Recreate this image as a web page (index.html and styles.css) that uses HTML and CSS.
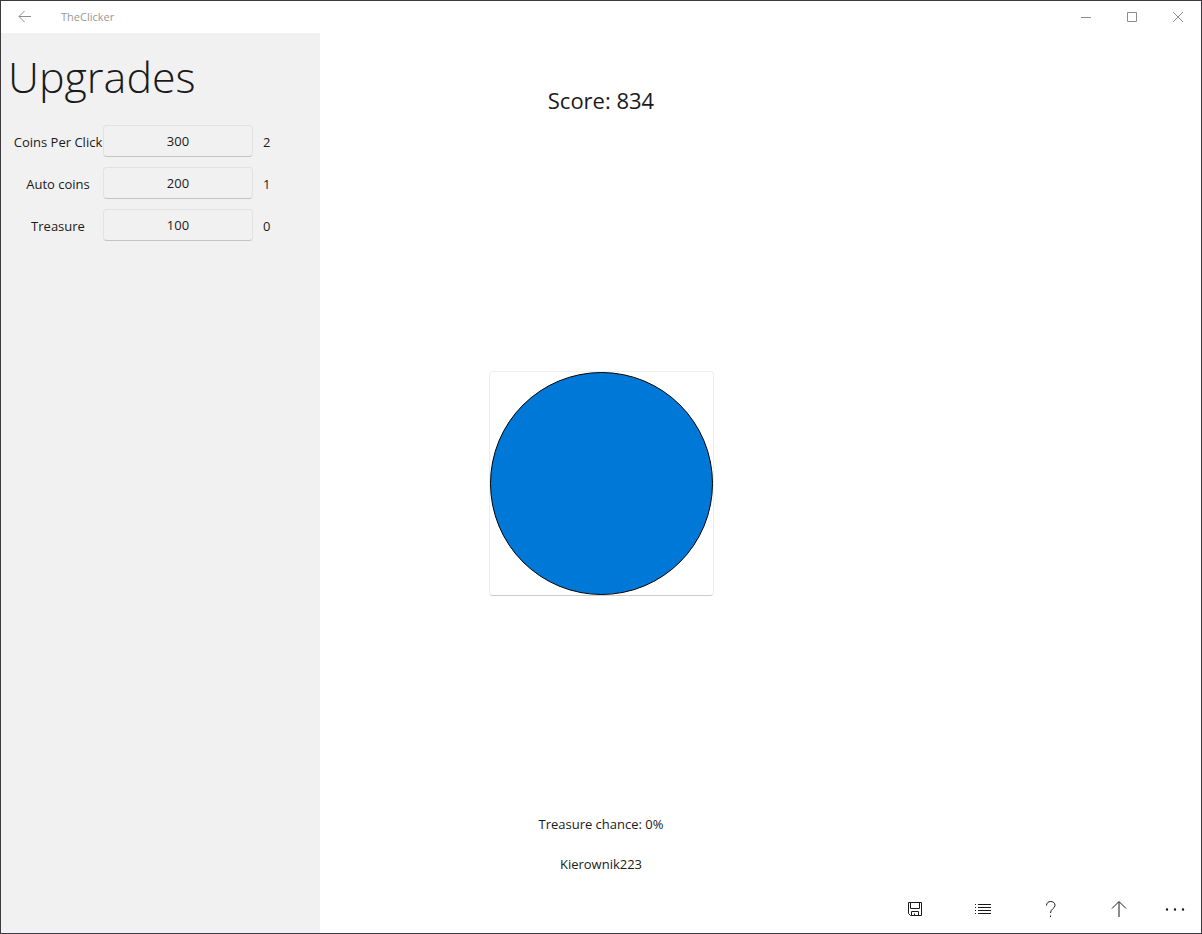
FILE: index.html
```
<!DOCTYPE html>
<html lang="en">
<head>
<meta charset="utf-8">
<title>TheClicker</title>
<link rel="stylesheet" href="styles.css">
</head>
<body>
<div class="window">
  <header class="titlebar">
    <button class="back" aria-label="Back"><svg width="14" height="12" viewBox="0 0 14 12"><path d="M13 5.500H1M6.500 0L1 5.500l5.500 5.500"/></svg></button>
    <span class="app-name">TheClicker</span>
    <button class="caption" aria-label="Minimize"><svg width="10" height="10" viewBox="0 0 10 10"><path d="M0 5.500H10"/></svg></button>
    <button class="caption" aria-label="Maximize"><svg width="10" height="10" viewBox="0 0 10 10"><path d="M.5.5h9v9h-9z"/></svg></button>
    <button class="caption" aria-label="Close"><svg width="10" height="10" viewBox="0 0 10 10"><path d="M0 0L10 10M10 0L0 10"/></svg></button>
  </header>
  <div class="content">
    <main class="game">
      <p class="score">Score: 834</p>
      <button class="coin" aria-label="Collect coins"><svg viewBox="0 0 223 223"><circle cx="111.500" cy="111.500" r="111" fill="#0078d7" stroke="#000"/></svg></button>
      <div class="info">
        <p>Treasure chance: 0%</p>
        <p>Kierownik223</p>
      </div>
    </main>
    <aside class="upgrades">
      <h1>Upgrades</h1>
      <div class="upgrade"><label for="per-click">Coins Per Click</label><button id="per-click">300</button><span>2</span></div>
      <div class="upgrade"><label for="auto">Auto coins</label><button id="auto">200</button><span>1</span></div>
      <div class="upgrade"><label for="treasure">Treasure</label><button id="treasure">100</button><span>0</span></div>
    </aside>
    <nav class="commands">
      <button class="command" aria-label="Save"><svg width="16" height="16" viewBox="0 0 16 16"><path d="M1.500 1.500h13v13h-11l-2-2zM3.500 1.500v6h9v-6M4.500 14.500v-4h7v4M7.500 14.500v-2"/></svg></button>
      <button class="command" aria-label="List"><svg width="16" height="16" viewBox="0 0 16 16"><path d="M3 3.500h13M3 6.500h13M3 9.500h13M3 12.500h13M0 3.500h1M0 6.500h1M0 9.500h1M0 12.500h1"/></svg></button>
      <button class="command" aria-label="Help"><svg width="16" height="16" viewBox="0 0 16 16"><path d="M3.500 4.500C3.500 2 5.300.5 7.700.5s4.300 1.500 4.300 3.800c0 3.200-4.500 3.500-4.500 7.700M7.500 14.500v1.500"/></svg></button>
      <button class="command" aria-label="Upload"><svg width="16" height="16" viewBox="0 0 16 16"><path d="M8 1v15" stroke="#8c8c8c" stroke-width="2"/><path d="M1 7.500l7-7 7 7"/></svg></button>
      <button class="more" aria-label="More"><svg width="20" height="4" viewBox="0 0 20 4"><path d="M2 2.500h.01M10 2.500h.01M18 2.500h.01" stroke-width="2.400" stroke-linecap="round"/></svg></button>
    </nav>
  </div>
</div>
</body>
</html>
```
FILE: styles.css
```
* {
  box-sizing: border-box;
}

body {
  margin: 0;
  font: 13px/20px "Open Sans", "Noto Sans", sans-serif;
  color: #1a1a1a;
}

p,
h1 {
  margin: 0;
  font-weight: 400;
}

button {
  padding: 0;
  border: 0;
  background: transparent;
  color: inherit;
  font: inherit;
}

svg {
  display: block;
  fill: none;
  stroke: #1a1a1a;
}

.window {
  display: flex;
  flex-direction: column;
  min-height: 100vh;
  border: 1px solid #3c393f;
  background: #fff;
}

.titlebar {
  display: flex;
  height: 32px;
  color: #999;
  font-size: 11px;
  line-height: 32px;
}

.titlebar svg {
  margin: auto;
  stroke: #8c8c8c;
}

.back {
  width: 48px;
}

.app-name {
  flex: 1;
  padding-left: 12px;
}

.caption {
  width: 46px;
}

.content {
  flex: 1;
  display: grid;
  grid-template: 1fr 48px / 319px 1fr;
}

.game {
  grid-area: 1 / 1 / 3 / 3;
  display: grid;
  grid-template-rows: 1fr auto 1fr;
  justify-items: center;
}

.score {
  padding-top: 51px;
  font-size: 22px;
  line-height: 32px;
}

.coin {
  width: 225px;
  border: 1px solid #ededed;
  border-bottom-color: #ccc;
  border-radius: 4px;
}

.info {
  display: grid;
  gap: 20px;
  align-self: end;
  padding-bottom: 59px;
  text-align: center;
}

.upgrades {
  grid-area: 1 / 1 / 3 / 2;
  display: flex;
  flex-direction: column;
  gap: 10px;
  padding-top: 12px;
  background: #f1f1f1;
}

.upgrades h1 {
  padding: 0 0 6px 7px;
  font-size: 43px;
  font-weight: 300;
  line-height: 64px;
}

.upgrade {
  display: grid;
  grid-template-columns: 90px 150px auto;
  align-items: center;
  padding-left: 12px;
}

.upgrade label,
.upgrade span {
  padding-top: 2px;
}

.upgrade label {
  text-align: center;
  white-space: nowrap;
}

.upgrade button {
  height: 32px;
  border: 1px solid #e2e2e2;
  border-bottom-color: #c4c4c4;
  border-radius: 4px;
}

.upgrade span {
  padding-left: 10px;
}

.commands {
  grid-area: 2 / 2;
  display: flex;
  justify-content: flex-end;
  z-index: 1;
}

.commands svg {
  margin: auto;
}

.command {
  width: 68px;
}

.more {
  width: 48px;
  padding-right: 4px;
}
```
